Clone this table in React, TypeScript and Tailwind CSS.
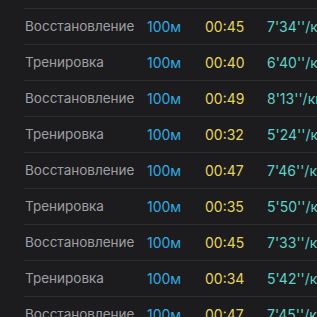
import React from 'react';

type Lap = {
    name: string;
    distance: string;
    time: string;
    pace: string;
};

const laps: Lap[] = [
    { name: 'Восстановление', distance: '100м', time: '00:45', pace: "7'34''/км" },
    { name: 'Тренировка', distance: '100м', time: '00:40', pace: "6'40''/км" },
    { name: 'Восстановление', distance: '100м', time: '00:49', pace: "8'13''/км" },
    { name: 'Тренировка', distance: '100м', time: '00:32', pace: "5'24''/км" },
    { name: 'Восстановление', distance: '100м', time: '00:47', pace: "7'46''/км" },
    { name: 'Тренировка', distance: '100м', time: '00:35', pace: "5'50''/км" },
    { name: 'Восстановление', distance: '100м', time: '00:45', pace: "7'33''/км" },
    { name: 'Тренировка', distance: '100м', time: '00:34', pace: "5'42''/км" },
    { name: 'Восстановление', distance: '100м', time: '00:47', pace: "7'45''/км" },
];

export default function App() {
    return (
        <div
            className="w-[317px] h-[317px] overflow-hidden bg-[#1c1c1e] pt-[8px]"
            style={{ fontFamily: 'Inter, "Noto Sans", sans-serif' }}
        >
            {laps.map((lap, i) => (
                <div
                    key={i}
                    className="ml-[24px] h-[36px] border-t border-[#2e2e30] grid grid-cols-[122px_58px_62px_1fr] items-center pl-[1px] whitespace-nowrap text-[14px]"
                >
                    <span className="text-[13.5px] text-[#9f9fa3]">{lap.name}</span>
                    <span className="text-[#34a9e0]">{lap.distance}</span>
                    <span className="text-[#e3d45e]">{lap.time}</span>
                    <span className="overflow-hidden text-[#5fd1c6]">{lap.pace}</span>
                </div>
            ))}
        </div>
    );
}
